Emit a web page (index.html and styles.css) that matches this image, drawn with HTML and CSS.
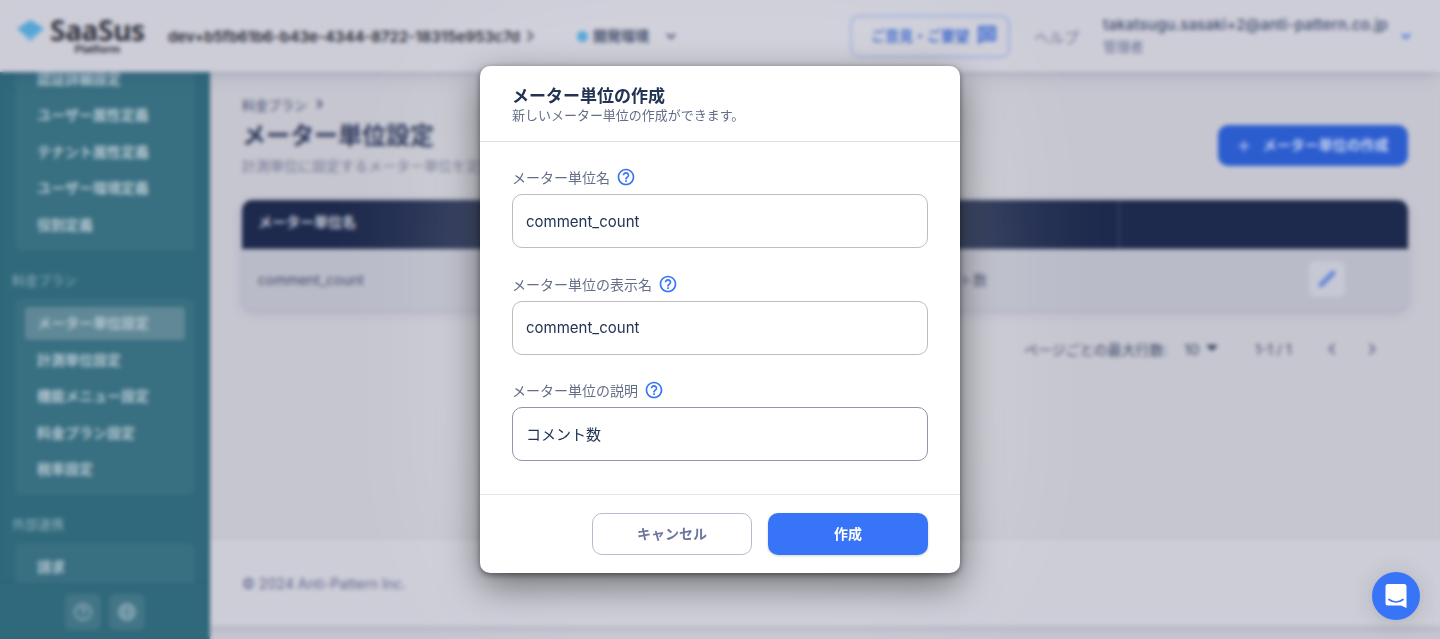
FILE: index.html
```html
<!DOCTYPE html>
<html lang="ja">
<head>
<meta charset="utf-8">
<title>メーター単位設定</title>
<link rel="stylesheet" href="styles.css">
</head>
<body>
<div class="app">
  <header class="topbar">
    <div class="logo">
      <svg class="logo-mark" width="29" height="24" viewBox="0 0 29 24"><path d="M1 9.500H28L14.500 23Z" fill="#76b6da"/><path d="M14.500 1 28 9.500 14.500 18 1 9.500Z" fill="#55a5d6"/></svg>
      <div class="logo-text"><span class="logo-name">SaaSus</span><span class="logo-sub">Platform</span></div>
    </div>
    <div class="tenant">dev+b5fb61b6-b43e-4344-8722-18315e953c7d</div>
    <svg class="tenant-arrow" width="8" height="12" viewBox="0 0 8 12"><path d="M1.500 1 6.500 6 1.500 11" class="stroke"/></svg>
    <div class="env"><i class="dot"></i><span>開発環境</span><svg width="10" height="7" viewBox="0 0 10 7"><path d="M1 1 5 5 9 1" class="stroke"/></svg></div>
    <div class="feedback"><span>ご意見・ご要望</span><svg width="18" height="18" viewBox="0 0 18 18"><path d="M1 1H17V14H4L1 17Z" fill="#8fa5da" stroke="#3763ca" stroke-width="1.800"/><path d="M4 4.500 9 8 14 4.500M5 11 9 8 13 11" fill="none" stroke="#3763ca" stroke-width="1.500"/></svg></div>
    <div class="help">ヘルプ</div>
    <div class="user"><span class="mail">takatsugu.sasaki+2@anti-pattern.co.jp</span><span class="role">管理者</span></div>
    <svg class="user-arrow" width="10" height="7" viewBox="0 0 10 7"><path d="M1 1 5 5 9 1" class="stroke"/></svg>
  </header>
  <div class="columns">
    <aside class="sidebar">
      <nav class="nav">
        <ul class="group">
          <li>認証詳細設定</li><li>ユーザー属性定義</li><li>テナント属性定義</li><li>ユーザー環境定義</li><li>役割定義</li>
        </ul>
        <div class="group-label">料金プラン</div>
        <ul class="group">
          <li class="active">メーター単位設定</li><li>計測単位設定</li><li>機能メニュー設定</li><li>料金プラン設定</li><li>税率設定</li>
        </ul>
        <div class="group-label">外部連携</div>
        <ul class="group last"><li>請求</li></ul>
      </nav>
      <div class="side-tools">
        <span class="tool"><svg width="20" height="20" viewBox="0 0 20 20"><circle cx="10" cy="10" r="8" class="stroke"/><path d="M7.600 8.200C7.600 5 12.400 5 12.400 8.200 12.400 10 10 10.200 10 12" class="stroke"/><path d="M10 13.500V15" class="stroke"/></svg></span>
        <span class="tool"><svg width="20" height="20" viewBox="0 0 20 20"><circle cx="10" cy="10" r="8" class="stroke"/><ellipse cx="10" cy="10" rx="3.500" ry="8" class="stroke"/><path d="M2.500 7.500H17.500M2.500 12.500H17.500" class="stroke"/></svg></span>
      </div>
    </aside>
    <main class="main">
      <div class="page-head">
        <div>
          <div class="crumb">料金プラン <svg width="7" height="10" viewBox="0 0 7 10"><path d="M1.500 1 5.500 5 1.500 9" class="stroke"/></svg></div>
          <h1 class="page-title">メーター単位設定</h1>
          <p class="page-desc">計測単位に設定するメーター単位を定義します。</p>
        </div>
        <div class="add"><svg width="12" height="12" viewBox="0 0 12 12"><path d="M6 .5V11.500M.5 6H11.500" class="thin"/></svg><span>メーター単位の作成</span></div>
      </div>
      <div class="table">
        <div class="row head"><div>メーター単位名</div><div></div><div></div><div class="divided"></div></div>
        <div class="row"><div>comment_count</div><div></div><div>コメント数</div><div class="actions"><span class="edit"><svg width="18" height="18" viewBox="0 0 18 18"><path d="M3 15 15 3" stroke="#5a7fd4" stroke-width="4.500" stroke-linecap="round"/></svg></span></div></div>
      </div>
      <div class="pager"><span class="per-page">ページごとの最大行数:</span><span class="size">10</span><i class="caret"></i><span class="range">1-1 / 1</span><svg width="8" height="12" viewBox="0 0 8 12"><path d="M6.500 1 1.500 6 6.500 11" class="stroke"/></svg><svg class="next" width="8" height="12" viewBox="0 0 8 12"><path d="M1.500 1 6.500 6 1.500 11" class="stroke"/></svg></div>
      <footer class="footer">© 2024 Anti-Pattern Inc.</footer>
    </main>
  </div>
</div>
<div class="chat"><svg width="24" height="26" viewBox="0 0 24 26"><path d="M4 1H20Q22.500 1 22.500 3.500V25L17 22.500H4Q1.500 22.500 1.500 20V3.500Q1.500 1 4 1Z" fill="#fff"/><path d="M5 16.500Q12 21.500 19 16.500" fill="none" stroke="#3874f7" stroke-width="1.700" stroke-linecap="round"/></svg></div>
<div class="overlay">
  <section class="dialog">
    <header class="dialog-head"><h2>メーター単位の作成</h2><p>新しいメーター単位の作成ができます。</p></header>
    <div class="dialog-body">
      <div class="field">
        <div class="label">メーター単位名<svg class="q" viewBox="0 0 24 24"><path d="M11 18h2v-2h-2v2zm1-16C6.480 2 2 6.480 2 12s4.480 10 10 10 10-4.480 10-10S17.520 2 12 2zm0 18c-4.410 0-8-3.590-8-8s3.590-8 8-8 8 3.590 8 8-3.590 8-8 8zm0-14c-2.210 0-4 1.790-4 4h2c0-1.100.9-2 2-2s2 .9 2 2c0 2-3 1.750-3 5h2c0-2.250 3-2.500 3-5 0-2.210-1.790-4-4-4z"/></svg></div>
        <div class="input">comment_count</div>
      </div>
      <div class="field">
        <div class="label">メーター単位の表示名<svg class="q" viewBox="0 0 24 24"><path d="M11 18h2v-2h-2v2zm1-16C6.480 2 2 6.480 2 12s4.480 10 10 10 10-4.480 10-10S17.520 2 12 2zm0 18c-4.410 0-8-3.590-8-8s3.590-8 8-8 8 3.590 8 8-3.590 8-8 8zm0-14c-2.210 0-4 1.790-4 4h2c0-1.100.9-2 2-2s2 .9 2 2c0 2-3 1.750-3 5h2c0-2.250 3-2.500 3-5 0-2.210-1.790-4-4-4z"/></svg></div>
        <div class="input second">comment_count</div>
      </div>
      <div class="field">
        <div class="label">メーター単位の説明<svg class="q" viewBox="0 0 24 24"><path d="M11 18h2v-2h-2v2zm1-16C6.480 2 2 6.480 2 12s4.480 10 10 10 10-4.480 10-10S17.520 2 12 2zm0 18c-4.410 0-8-3.590-8-8s3.590-8 8-8 8 3.590 8 8-3.590 8-8 8zm0-14c-2.210 0-4 1.790-4 4h2c0-1.100.9-2 2-2s2 .9 2 2c0 2-3 1.750-3 5h2c0-2.250 3-2.500 3-5 0-2.210-1.790-4-4-4z"/></svg></div>
        <div class="input hover">コメント数</div>
      </div>
    </div>
    <footer class="dialog-foot"><button class="btn cancel">キャンセル</button><button class="btn create">作成</button></footer>
  </section>
</div>
</body>
</html>
```
FILE: styles.css
```css
* { box-sizing: border-box; }
body {
  margin: 0;
  height: 639px;
  overflow: hidden;
  background: #c6c6d0;
  color: #223354;
  font-family: Inter, "Noto Sans CJK JP", sans-serif;
  font-size: 14px;
}
ul, h1, h2, p { margin: 0; padding: 0; list-style: none; }
svg { display: block; flex: none; }
.stroke { fill: none; stroke: currentColor; stroke-width: 2; }
.thin { fill: none; stroke: currentColor; stroke-width: 1.5; }

.app { height: 639px; display: flex; flex-direction: column; }

/* Top bar */
.topbar {
  position: relative;
  z-index: 2;
  flex: none;
  height: 72px;
  display: flex;
  align-items: center;
  background: #cdcdd8;
  box-shadow: 0 2px 8px -3px rgba(60, 70, 120, .35), 0 5px 22px -4px rgba(60, 70, 120, .15);
  white-space: nowrap;
}
.logo { width: 130px; margin-left: 16px; display: flex; align-items: flex-start; }
.logo-mark { margin-top: 1px; }
.logo-text { display: flex; flex-direction: column; align-items: center; margin-left: 5px; color: #30323c; }
.logo-name { font: 700 28px/25px "Noto Sans", sans-serif; letter-spacing: -.3px; height: 25px; }
.logo-sub { font: 700 11px/12px Inter, sans-serif; }
.tenant { width: 352px; margin-left: 22px; font-weight: 600; font-size: 15px; color: #22242e; }
.tenant-arrow { margin-left: 6px; color: #42465a; }
.env { display: flex; align-items: center; margin-left: 43px; color: #2d3a5c; font-weight: 700; }
.env span { margin-top: -2px; }
.dot { width: 11px; height: 11px; border-radius: 50%; background: #459fd8; margin-right: 5px; }
.env svg { margin-left: 17px; }
.feedback {
  width: 160px; height: 43px; margin-left: 174px;
  display: flex; align-items: center; justify-content: center; gap: 9px;
  padding-left: 7px;
  border: 2px solid #98addd; border-radius: 9px;
  color: #3763ca; font-weight: 700;
}
.feedback span { margin-top: -2px; }
.feedback svg { margin-top: -2px; }
.help { width: 46px; margin-left: 24px; font-size: 15px; color: #75799a; }
.user { width: 285px; margin-left: 23px; display: flex; flex-direction: column; }
.mail { font-size: 15px; line-height: 22px; font-weight: 500; letter-spacing: .16px; color: #414c70; }
.role { font-size: 13.500px; line-height: 22px; color: #6a7094; }
.user-arrow { margin-left: 13px; color: #3f70d9; }

.columns { flex: 1; min-height: 0; display: flex; }

/* Sidebar */
.sidebar { width: 210px; flex: none; display: flex; flex-direction: column; background: #2f697b; color: #b6c7d2; }
.nav { height: 511px; overflow: hidden; padding: 0 15px; box-shadow: inset 0 -2px 2px #2b6274; }
.group { padding: 9px 10px; border-radius: 6px; background: #386f81; display: flex; flex-direction: column; gap: 3.5px; }
.group:first-child { margin-top: -18.5px; }
.group li { height: 33px; line-height: 32px; padding-left: 12px; border-radius: 4px; font-weight: 700; }
.group .active { background: #608896; }
.group.last { padding-top: 8px; }
.group-label { height: 47.5px; margin-left: -3px; padding-top: 19px; line-height: 20px; font-size: 13px; color: #8fb0bd; }
.side-tools { flex: 1; padding-top: 11px; display: flex; justify-content: center; gap: 8px; }
.tool { width: 36px; height: 36px; border-radius: 6px; background: #427586; color: #8eabb7; display: grid; place-items: center; }

/* Page content */
.main { flex: 1; display: flex; flex-direction: column; min-width: 0; }
.page-head { height: 128px; padding: 21px 32px 0; display: flex; justify-content: space-between; }
.crumb { display: flex; align-items: center; gap: 9px; height: 22px; font-size: 13px; color: #414b70; }
.page-title { font-size: 24px; line-height: 41px; color: #2b375b; }
.page-desc { line-height: 20px; color: #747995; }
.add {
  width: 190px; height: 41px; margin-top: 32px;
  display: flex; align-items: center; justify-content: center; gap: 13px;
  border-radius: 10px; background: #2c5dcf; color: #c3d0ef; font-weight: 700;
}
.add span { margin-top: -3px; }
.table { margin: 0 32px; border-radius: 10px; overflow: hidden; background: #b9bbc8; height: 110px; flex: none; box-shadow: 0 3px 12px rgba(100, 90, 150, .2), 0 1px 2px rgba(60, 70, 110, .12); color: #414b6c; }
.row { display: grid; grid-template-columns: 330px 329px 217px 1fr; height: 60px; align-items: center; }
.row > div { padding-left: 16px; }
.row.head { height: 49px; line-height: 44px; align-items: start; background: #1e2a4d; color: #c6cad7; font-weight: 700; }
.head > .divided { height: 49px; border-left: 2px solid #34405f; }
.row > .actions { display: flex; justify-content: flex-end; padding-right: 63px; }
.edit { width: 36px; height: 36px; border-radius: 6px; background: #c6c8d5; display: grid; place-items: center; }
.pager { display: flex; align-items: center; height: 40px; margin-top: 19px; padding-left: 814px; color: #414b6b; white-space: nowrap; }
.per-page { width: 143px; }
.size { margin-left: 17px; font-size: 15px; width: 17px; }
.caret { margin-left: 5px; margin-top: -2px; border: 6px solid transparent; border-top-color: #303b5b; border-bottom: 0; }
.range { margin-left: 37px; width: 39px; font-size: 14px; }
.pager svg { margin-left: 34px; color: #64698a; }
.pager .next { margin-left: 32px; }
.footer {
  height: 86px; margin-top: auto; margin-bottom: 13px; padding-left: 32px; line-height: 87px; letter-spacing: .05px;
  background: #cdcdd8; color: #62688c;
  box-shadow: 0 3px 7px rgba(90, 95, 145, .2);
}

/* Chat launcher */
.chat { position: absolute; z-index: 5; left: 1372px; top: 571.5px; width: 48px; height: 48px; border-radius: 50%; background: #3874f7; display: grid; place-items: center; box-shadow: 0 1px 6px rgba(0, 0, 0, .06), 0 2px 24px rgba(0, 0, 0, .12); }

/* Dialog */
.overlay { position: absolute; z-index: 4; inset: 0; display: flex; align-items: center; justify-content: center; backdrop-filter: blur(2px); }
.dialog {
  width: 480px; height: 507px; border-radius: 10px; background: #fff;
  display: flex; flex-direction: column;
  box-shadow: 0 2px 6px rgba(0, 0, 0, .45), 0 12px 38px rgba(0, 0, 0, .5), 0 0 150px rgba(255, 255, 255, .32);
}
.dialog-head { height: 76px; padding: 17px 32px 0; border-bottom: 1px solid #dedfe1; }
.dialog-head h2 { font-size: 17px; line-height: 26px; }
.dialog-head p { margin-top: -2px; font-size: 13px; line-height: 16px; letter-spacing: -.02px; color: #646f87; }
.dialog-body { height: 352px; padding: 23px 32px 0; display: flex; flex-direction: column; gap: 23.5px; }
.label { height: 29px; padding-bottom: 5px; display: flex; align-items: center; gap: 6px; color: #646f87; }
.q { width: 20px; height: 20px; fill: #3874f7; }
.input { height: 54px; padding-left: 13px; line-height: 54px; border: 1px solid #bdbdc0; border-radius: 10px; font-size: 15px; }
.input.second { line-height: 52px; }
.input.hover { border-color: #9096ab; }
.dialog-foot { flex: 1; padding: 18px 32px 0; display: flex; justify-content: flex-end; gap: 16px; border-top: 1px solid #e6e6e8; }
.btn { width: 160px; height: 42px; padding: 0; border-radius: 10px; font: 700 14px/20px Inter, "Noto Sans CJK JP", sans-serif; }
.cancel { border: 1px solid #b8bacf; background: #fff; color: #6e759f; }
.create { border: 0; background: #3874f7; color: #fff; box-shadow: 0 1px 3px rgba(0, 0, 0, .18); }
```
